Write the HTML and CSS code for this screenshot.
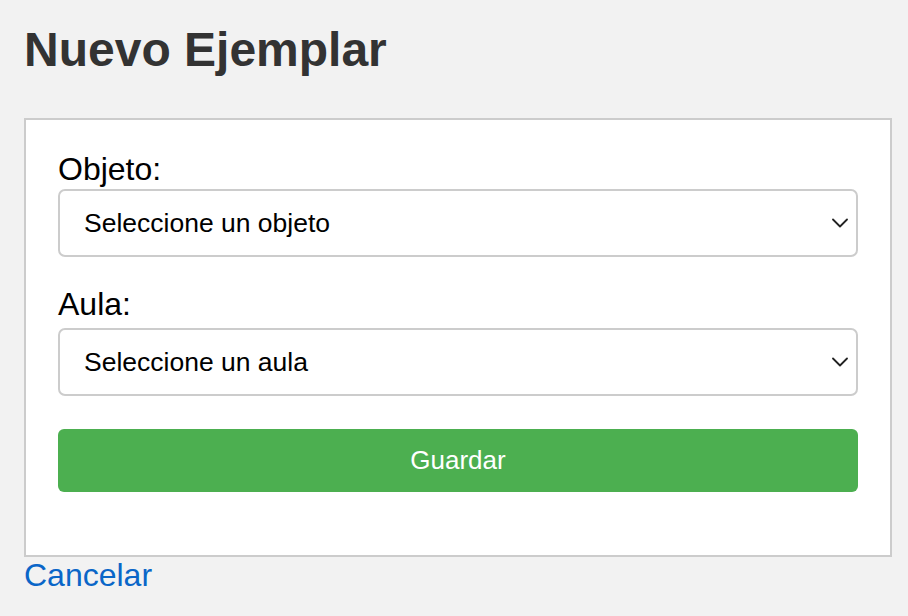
FILE: index.html
```html
<!DOCTYPE html>
<html lang="es">
<head>
<meta charset="utf-8">
<title>Nuevo Ejemplar</title>
<link rel="stylesheet" href="styles.css">
</head>
<body>
<main class="page">
  <h1 class="title">Nuevo Ejemplar</h1>
  <form class="card">
    <label class="label" for="objeto">Objeto:</label>
    <div class="select-wrap">
      <select id="objeto" class="select">
        <option>Seleccione un objeto</option>
      </select>
      <svg class="chevron" width="16" height="10" viewBox="0 0 16 10" aria-hidden="true"><path d="M1 1.5 L8 8.5 L15 1.5" fill="none" stroke="#222" stroke-width="1.8" stroke-linecap="round" stroke-linejoin="round"/></svg>
    </div>
    <label class="label label-second" for="aula">Aula:</label>
    <div class="select-wrap">
      <select id="aula" class="select">
        <option>Seleccione un aula</option>
      </select>
      <svg class="chevron" width="16" height="10" viewBox="0 0 16 10" aria-hidden="true"><path d="M1 1.5 L8 8.5 L15 1.5" fill="none" stroke="#222" stroke-width="1.8" stroke-linecap="round" stroke-linejoin="round"/></svg>
    </div>
    <button type="button" class="button">Guardar</button>
  </form>
  <a class="link" href="#">Cancelar</a>
</main>
</body>
</html>
```

FILE: styles.css
```css
html, body {
  margin: 0;
  padding: 0;
  background: #f2f2f2;
}

body {
  font-family: "Liberation Sans", Arial, Helvetica, sans-serif;
}

.page {
  padding: 22px 24px 0 24px;
  display: flex;
  flex-direction: column;
  align-items: flex-start;
}

.title {
  margin: 0 0 41px 0;
  font-size: 48px;
  font-weight: bold;
  line-height: 55px;
  color: #333;
}

.card {
  width: 800px;
  padding: 31px 32px 63px 32px;
  background: #fff;
  border: 2px solid #cccccc;
  display: flex;
  flex-direction: column;
}

.label {
  font-size: 32px;
  line-height: 36px;
  color: #000;
  margin-bottom: 2px;
}

.label-second {
  margin-top: 29px;
  margin-bottom: 6px;
}

.select-wrap {
  position: relative;
}

.select {
  appearance: none;
  -webkit-appearance: none;
  width: 100%;
  height: 68px;
  box-sizing: border-box;
  padding: 0 48px 0 24px;
  font-family: "Liberation Sans", Arial, Helvetica, sans-serif;
  font-size: 26.5px;
  color: #000;
  background: #fff;
  border: 2px solid #cccccc;
  border-radius: 7px;
  margin: 0;
}

.chevron {
  position: absolute;
  right: 10px;
  top: 29px;
  pointer-events: none;
}

.button {
  margin-top: 33px;
  height: 63px;
  width: 100%;
  border: none;
  border-radius: 6px;
  background: #4caf50;
  color: #fff;
  font-family: "Liberation Sans", Arial, Helvetica, sans-serif;
  font-size: 26px;
  padding: 0;
}

.link {
  margin-top: 0;
  font-size: 32px;
  line-height: 36px;
  color: #0a66c8;
  text-decoration: none;
}
```
